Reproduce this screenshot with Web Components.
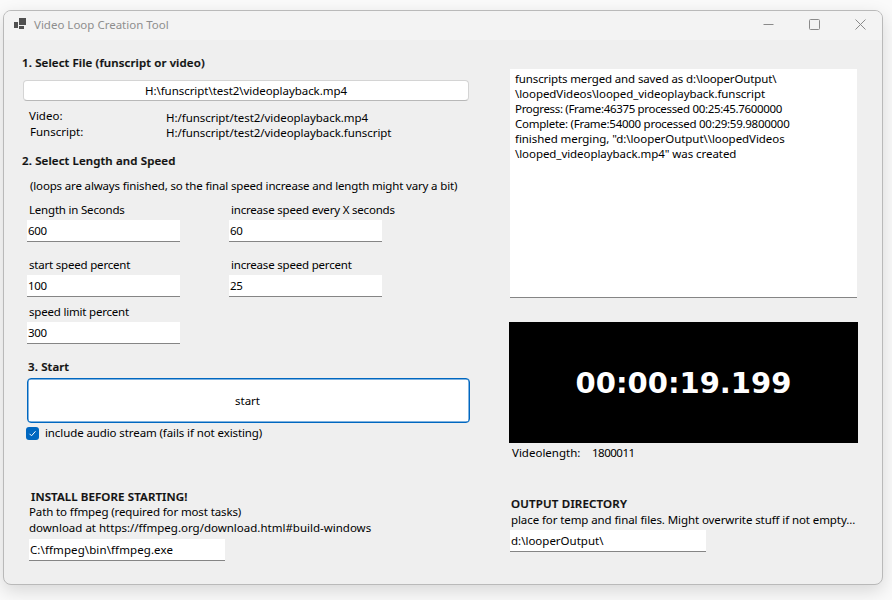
<!DOCTYPE html>
<html><head><meta charset="utf-8">
<style>
html,body{margin:0;padding:0;background:#fafafa;height:600px;overflow:hidden}
body{font:11.500px/16px "Noto Sans","Open Sans",sans-serif;color:#000;padding:10px 0 0 3px;box-sizing:border-box}
.left{display:flex;flex-direction:column}
.right{display:flex;flex-direction:column}
.num{letter-spacing:-.3px}
</style></head><body>
<template id="t-window"><style>
:host{display:block;width:880px;height:575px;box-sizing:border-box;border:1px solid #b9b9b9;border-radius:8px;background:#efefef;box-shadow:0 6px 18px rgba(0,0,0,.14);overflow:hidden}
.body{display:grid;grid-template-columns:505px 1fr;height:544px}
</style><slot name="title"></slot><div class="body"><slot></slot></div></template>

<template id="t-titlebar"><style>
:host{display:flex;align-items:center;height:29px;background:#f3f3f3;color:#8e8e8e;padding-left:10px}
svg{display:block;flex:none}
.i{align-self:flex-start;margin-top:7px}
.t{margin:0 0 2px 8px;font-size:11.500px;flex:1}
.b{width:46px;height:29px;display:flex;align-items:center;justify-content:center;flex:none}
.b svg{margin:0 0 3px 2px}
</style>
<svg class="i" width="12" height="11" viewBox="0 0 12 11"><path fill="#505050" d="M5 0h7v7H5zM0 4h4v6H0zM5 8h5v3H5z"/></svg>
<span class="t"><slot></slot></span>
<span class="b"><svg width="11" height="11" viewBox="0 0 11 11"><path d="M.5 5.500h10" stroke="#8a8a8a" fill="none"/></svg></span>
<span class="b"><svg width="11" height="11" viewBox="0 0 11 11"><rect x=".5" y=".5" width="10" height="10" rx="1" stroke="#8a8a8a" fill="none"/></svg></span>
<span class="b"><svg width="11" height="11" viewBox="0 0 11 11"><path d="M.5.500l10 10M10.500.500l-10 10" stroke="#8a8a8a" fill="none"/></svg></span>
</template>

<template id="t-heading"><style>
:host{display:block;font-weight:600;font-size:11.500px;line-height:16px;color:#111;-webkit-text-stroke:.2px #111;letter-spacing:.13px}
</style><slot></slot></template>

<template id="t-input"><style>
:host{display:flex;align-items:center;box-sizing:border-box;height:22px;background:#fff;border-bottom:1px solid #858585;padding:0 1px;font-size:11.500px;line-height:16px;white-space:nowrap}
</style><slot></slot></template>

<template id="t-field"><style>
:host{display:flex;flex-direction:column;width:153px}
.l{padding-left:2px;line-height:16px;height:18px;white-space:nowrap;letter-spacing:-.2px}
</style><span class="l"><slot name="label"></slot></span><slot></slot></template>

<template id="t-button"><style>
:host{display:flex;align-items:center;justify-content:center;box-sizing:border-box;background:#fff;border:1px solid #d4d4d4;border-bottom-color:#b8b8b8;border-radius:4px;font-size:11.500px}
:host([primary]){border:1px solid #0067c0;border-radius:4px;box-shadow:inset 0 0 0 .5px #0067c0;padding-right:2px}
</style><slot></slot></template>

<template id="t-check"><style>
:host{display:flex;align-items:center;gap:6px;height:16px;letter-spacing:-.1px}
.box{width:13px;height:13px;border-radius:3px;background:#0067c0;display:flex;align-items:center;justify-content:center;flex:none}
</style><span class="box"><svg width="9" height="9" viewBox="0 0 9 9"><path d="M1.500 4.800l2 2 4-4.500" stroke="#fff" fill="none"/></svg></span><span><slot></slot></span></template>

<template id="t-log"><style>
:host{display:block;box-sizing:border-box;width:347px;height:229px;background:#fff;border-bottom:1px solid #858585;padding:2px 5px;line-height:15px;font-size:11.500px;white-space:pre-line;letter-spacing:-.06px}
</style><slot></slot></template>

<template id="t-timer"><style>
:host{display:flex;align-items:center;justify-content:center;width:349px;height:121px;background:#000;color:#fff;font-weight:700;font-size:29px;line-height:40px;font-family:"DejaVu Sans",sans-serif}
</style><slot></slot></template>

<x-window>
<x-titlebar slot="title">Video Loop Creation Tool</x-titlebar>
<div class="left">
  <x-heading style="margin:15px 0 0 18px">1. Select File (funscript or video)</x-heading>
  <x-button style="margin:9px 0 0 19px;width:446px;height:21px;letter-spacing:-.05px">H:\funscript\test2\videoplayback.mp4</x-button>
  <div style="display:grid;grid-template-columns:137px 1fr;margin:7px 0 0 25px;line-height:16px">
    <span>Video:</span><span style="margin:2px 0 -2px;letter-spacing:-.05px">H:/funscript/test2/videoplayback.mp4</span>
    <span style="margin-left:1px">Funscript:</span><span style="margin:1px 0 -1px;letter-spacing:-.05px">H:/funscript/test2/videoplayback.funscript</span>
  </div>
  <x-heading style="margin:13px 0 0 18px">2. Select Length and Speed</x-heading>
  <div style="margin:9px 0 0 26px;letter-spacing:-.16px">(loops are always finished, so the final speed increase and length might vary a bit)</div>
  <div style="display:grid;grid-template-columns:153px 153px;column-gap:49px;margin:8px 0 0 23px;row-gap:15px">
    <x-field><span slot="label">Length in Seconds</span><x-input><span class="num">600</span></x-input></x-field>
    <x-field><span slot="label">increase speed every X seconds</span><x-input><span class="num">60</span></x-input></x-field>
    <x-field><span slot="label">start speed percent</span><x-input><span class="num">100</span></x-input></x-field>
    <x-field><span slot="label">increase speed percent</span><x-input><span class="num">25</span></x-input></x-field>
    <x-field style="margin-top:-8px"><span slot="label">speed limit percent</span><x-input><span class="num">300</span></x-input></x-field>
  </div>
  <x-heading style="margin:15px 0 0 24px">3. Start</x-heading>
  <x-button primary style="margin:3px 0 0 23px;width:443px;height:45px">start</x-button>
  <x-check style="margin:2px 0 0 22px">include audio stream (fails if not existing)</x-check>
  <x-heading style="margin:48px 0 0 27px">INSTALL BEFORE STARTING!</x-heading>
  <div style="margin:-1px 0 0 25px;line-height:16px"><span style="letter-spacing:-.12px">Path to ffmpeg (required for most tasks)</span><br>download at https://ffmpeg.org/download.html#build-windows</div>
  <x-input style="margin:3px 0 0 25px;width:196px;letter-spacing:.1px">C:\ffmpeg\bin\ffmpeg.exe</x-input>
</div>
<div class="right">
  <x-log style="margin:29px 0 0 1px"><span style="letter-spacing:-.13px">funscripts merged and saved as d:\looperOutput\</span>
\loopedVideos\looped_videoplayback.funscript
<span style="letter-spacing:-.33px">Progress: (Frame:46375 processed 00:25:45.7600000</span>
<span style="letter-spacing:-.27px">Complete: (Frame:54000 processed 00:29:59.9800000</span>
finished merging, "d:\looperOutput\\loopedVideos
\looped_videoplayback.mp4" was created</x-log>
  <x-timer style="margin:24px 0 0 0">00:00:19.199</x-timer>
  <div style="margin:2px 0 0 3px;display:grid;grid-template-columns:80px 1fr"><span>Videolength:</span><span style="letter-spacing:-.5px">1800011</span></div>
  <x-heading style="margin:35px 0 0 2px;letter-spacing:.2px">OUTPUT DIRECTORY</x-heading>
  <div style="margin:0 0 0 2px;line-height:15px;letter-spacing:-.09px">place for temp and final files. Might overwrite stuff if not empty...</div>
  <x-input style="margin:3px 0 0 1px;width:196px">d:\looperOutput\</x-input>
</div>
</x-window>
<script>
for (const n of ['window','titlebar','heading','input','field','button','check','log','timer']) {
  customElements.define('x-'+n, class extends HTMLElement {
    constructor(){super();this.attachShadow({mode:'open'}).appendChild(document.getElementById('t-'+n).content.cloneNode(true));}
  });
}
</script>
</body></html>
